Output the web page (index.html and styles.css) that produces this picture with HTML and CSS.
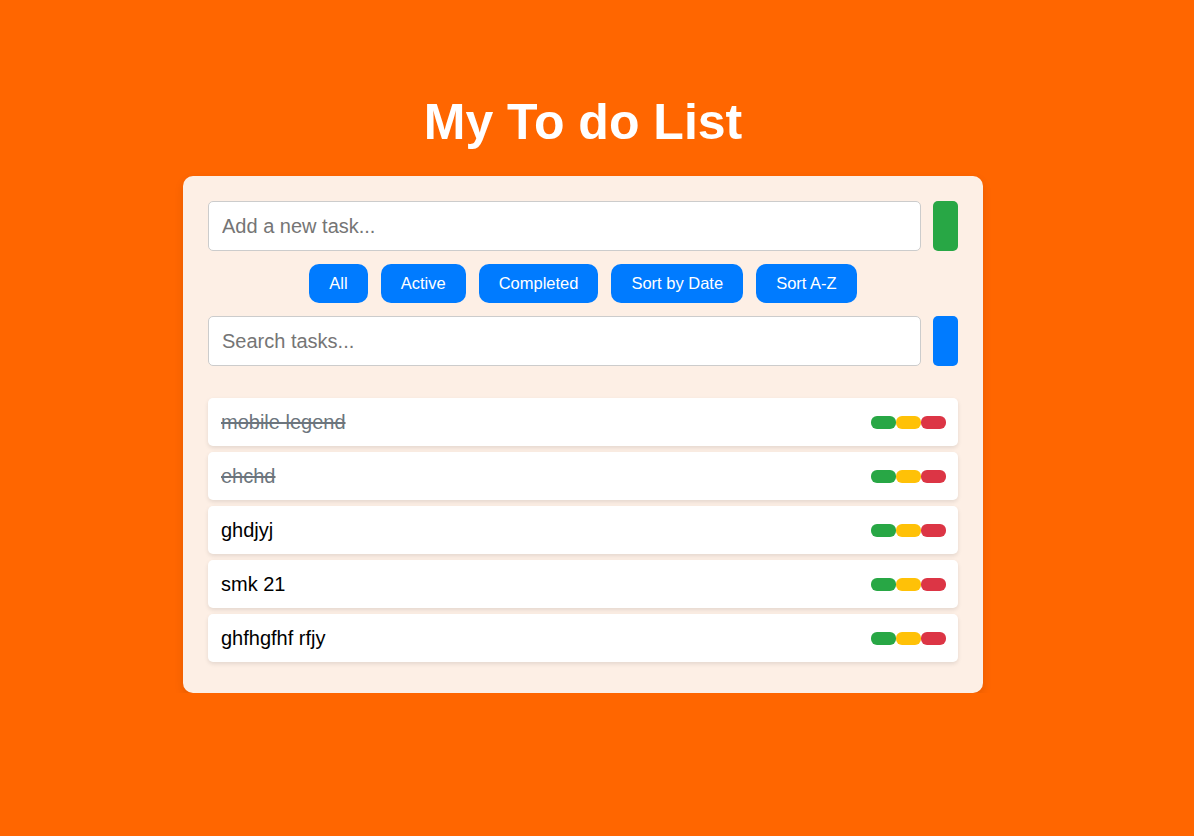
FILE: index.html
```html
<!DOCTYPE html>
<html>
<head>
<meta charset="utf-8">
<link rel="stylesheet" href="styles.css">
</head>
<body>
<div class="page">
  <h1 class="title">My To do List</h1>
  <div class="card">
    <div class="row">
      <input class="field" type="text" placeholder="Add a new task...">
      <button class="side-btn green"></button>
    </div>
    <div class="filters">
      <button class="filter">All</button>
      <button class="filter">Active</button>
      <button class="filter">Completed</button>
      <button class="filter">Sort by Date</button>
      <button class="filter">Sort A-Z</button>
    </div>
    <div class="row">
      <input class="field" type="text" placeholder="Search tasks...">
      <button class="side-btn blue"></button>
    </div>
    <ul class="list">
      <li class="item done"><span class="text">mobile legend</span><span class="actions"><button class="act green"></button><button class="act yellow"></button><button class="act red"></button></span></li>
      <li class="item done"><span class="text">ehchd</span><span class="actions"><button class="act green"></button><button class="act yellow"></button><button class="act red"></button></span></li>
      <li class="item"><span class="text">ghdjyj</span><span class="actions"><button class="act green"></button><button class="act yellow"></button><button class="act red"></button></span></li>
      <li class="item"><span class="text">smk 21</span><span class="actions"><button class="act green"></button><button class="act yellow"></button><button class="act red"></button></span></li>
      <li class="item"><span class="text">ghfhgfhf rfjy</span><span class="actions"><button class="act green"></button><button class="act yellow"></button><button class="act red"></button></span></li>
    </ul>
  </div>
</div>
</body>
</html>
```

FILE: styles.css
```css
* { box-sizing: border-box; }
html, body {
  margin: 0;
  padding: 0;
  background: #ff6600;
  font-family: "Liberation Sans", Arial, sans-serif;
}
.page {
  padding-top: 95px;
  width: 800px;
  margin-left: 183px;
}
.title {
  margin: 0 0 26px;
  font-size: 50px;
  line-height: 55px;
  font-weight: bold;
  color: #ffffff;
  text-align: center;
}
.card {
  background: #fdefe5;
  border-radius: 10px;
  padding: 25px 25px 31px;
  box-shadow: 0 4px 10px rgba(0, 0, 0, 0.1);
}
.row {
  display: flex;
  gap: 12px;
}
.field {
  flex: 1;
  height: 50px;
  border: 1px solid #cccccc;
  border-radius: 5px;
  padding: 0 13px;
  font-family: "Liberation Sans", Arial, sans-serif;
  font-size: 20px;
  color: #000;
  background: #fff;
  outline: none;
}
.field::placeholder { color: #757575; }
.side-btn {
  width: 25px;
  height: 50px;
  border: none;
  border-radius: 5px;
  padding: 0;
}
.green { background: #28a745; }
.blue { background: #007bff; }
.yellow { background: #ffc107; }
.red { background: #dc3545; }
.filters {
  display: flex;
  justify-content: center;
  gap: 13px;
  margin: 13px 0;
}
.filter {
  background: #007bff;
  color: #fff;
  border: none;
  border-radius: 10px;
  padding: 0 20px;
  height: 39px;
  font-family: "Liberation Sans", Arial, sans-serif;
  font-size: 16.5px;
}
.list {
  list-style: none;
  margin: 32px 0 0;
  padding: 0;
  display: flex;
  flex-direction: column;
  gap: 6px;
}
.item {
  display: flex;
  justify-content: space-between;
  align-items: center;
  background: #fff;
  border-radius: 5px;
  padding: 12.5px 12px 12.5px 13px;
  box-shadow: 0 2px 4px rgba(0, 0, 0, 0.1);
  font-size: 20px;
  line-height: 23px;
  color: #000;
}
.item.done .text {
  text-decoration: line-through;
  color: #6c757d;
}
.actions {
  display: flex;
}
.act {
  width: 25px;
  height: 13px;
  border: none;
  border-radius: 6px;
  padding: 0;
}
```
